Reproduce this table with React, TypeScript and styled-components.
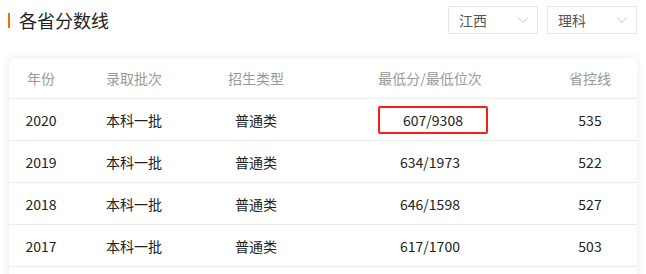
import React from 'react';
import styled, { createGlobalStyle } from 'styled-components';

const GlobalStyle = createGlobalStyle`
  body {
    margin: 0;
    background: #fff;
    font-family: "Microsoft YaHei", "Noto Sans CJK SC", sans-serif;
  }
`;

const Page = styled.div`
  width: 646px;
  height: 274px;
  overflow: hidden;
  padding: 6px 9px 0 8px;
  box-sizing: border-box;
`;

const Header = styled.div`
  display: flex;
  align-items: center;
  justify-content: space-between;
  height: 28px;
`;

const Title = styled.h2`
  margin: 0;
  display: flex;
  align-items: center;
  gap: 9px;
  font-size: 18px;
  font-weight: 400;
  color: #222;
  line-height: 28px;
  &::before {
    content: '';
    width: 2px;
    height: 15px;
    background: #ff6a00;
  }
`;

const Filters = styled.div`
  display: flex;
  gap: 9px;
`;

const Dropdown = styled.div`
  width: 90px;
  height: 28px;
  box-sizing: border-box;
  border: 1px solid #e8e8e8;
  display: flex;
  align-items: center;
  justify-content: space-between;
  padding: 0 8px 0 10px;
  font-size: 14px;
  color: #555;
`;

const Card = styled.div`
  margin-top: 24px;
  margin-left: 1px;
  background: #fff;
  border-radius: 6px 6px 0 0;
  box-shadow: 0 0 10px rgba(0, 0, 0, 0.09);
  padding-bottom: 20px;
`;

const Row = styled.div<{ $head?: boolean }>`
  display: grid;
  grid-template-columns: 64px 122px 122px 226px 94px;
  height: ${(p) => (p.$head ? 41 : 42)}px;
  align-items: center;
  border-bottom: 1px solid #ececec;
  font-size: 14px;
  color: ${(p) => (p.$head ? '#999' : '#222')};
  box-sizing: border-box;
`;

const Cell = styled.div`
  text-align: center;
  display: flex;
  justify-content: center;
`;

const Marked = styled.span`
  width: 110px;
  height: 28px;
  box-sizing: border-box;
  border: 2px solid #f5221b;
  border-radius: 2px;
  display: flex;
  align-items: center;
  justify-content: center;
  margin-left: 6px;
`;

const Chevron = () => (
  <svg width="12" height="8" viewBox="0 0 12 8">
    <path d="M1 1.5 L6 6.5 L11 1.5" fill="none" stroke="#c8c8c8" strokeWidth="1" />
  </svg>
);

const rows = [
  { year: '2020', batch: '本科一批', type: '普通类', score: '607/9308', line: '535', marked: true },
  { year: '2019', batch: '本科一批', type: '普通类', score: '634/1973', line: '522' },
  { year: '2018', batch: '本科一批', type: '普通类', score: '646/1598', line: '527' },
  { year: '2017', batch: '本科一批', type: '普通类', score: '617/1700', line: '503' },
];

const App = () => (
  <Page>
    <GlobalStyle />
    <Header>
      <Title>各省分数线</Title>
      <Filters>
        <Dropdown>
          江西
          <Chevron />
        </Dropdown>
        <Dropdown>
          理科
          <Chevron />
        </Dropdown>
      </Filters>
    </Header>
    <Card>
      <Row $head>
        <Cell>年份</Cell>
        <Cell>录取批次</Cell>
        <Cell>招生类型</Cell>
        <Cell>最低分/最低位次</Cell>
        <Cell>省控线</Cell>
      </Row>
      {rows.map((r) => (
        <Row key={r.year}>
          <Cell>{r.year}</Cell>
          <Cell>{r.batch}</Cell>
          <Cell>{r.type}</Cell>
          <Cell>{r.marked ? <Marked>{r.score}</Marked> : r.score}</Cell>
          <Cell>{r.line}</Cell>
        </Row>
      ))}
    </Card>
  </Page>
);

export default App;
